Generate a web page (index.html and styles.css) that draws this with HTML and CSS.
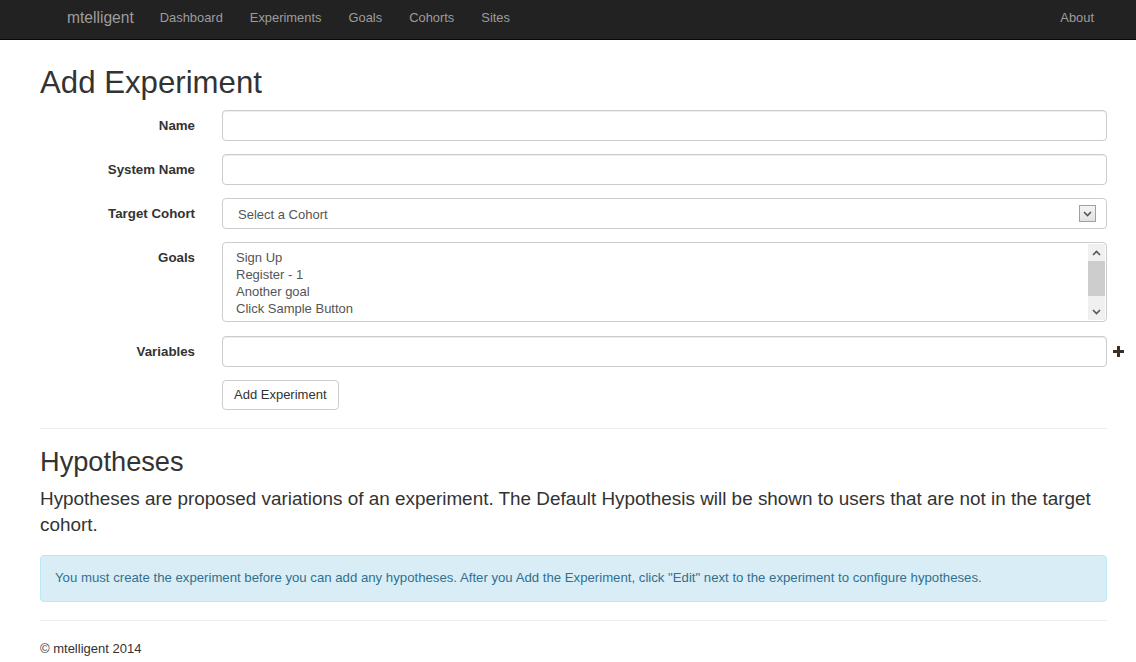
FILE: index.html
```html
<!DOCTYPE html>
<html>
<head>
<meta charset="utf-8">
<title>Add Experiment</title>
<link rel="stylesheet" href="styles.css">
</head>
<body>
<nav class="navbar">
  <div class="nav-left">
    <a class="brand" href="#">mtelligent</a>
    <a class="nav-link" href="#">Dashboard</a>
    <a class="nav-link" href="#">Experiments</a>
    <a class="nav-link" href="#">Goals</a>
    <a class="nav-link" href="#">Cohorts</a>
    <a class="nav-link" href="#">Sites</a>
  </div>
  <a class="nav-link" href="#">About</a>
</nav>
<main class="container">
  <h1 class="title">Add Experiment</h1>
  <form class="form">
    <div class="row">
      <label class="label">Name</label>
      <div class="field"><input class="input" type="text"></div>
    </div>
    <div class="row">
      <label class="label">System Name</label>
      <div class="field"><input class="input" type="text"></div>
    </div>
    <div class="row">
      <label class="label">Target Cohort</label>
      <div class="field">
        <div class="select">
          <span class="select-text">Select a Cohort</span>
          <span class="select-arrow"><svg width="9" height="6" viewBox="0 0 9 6"><path d="M1 1l3.5 3.5L8 1" fill="none" stroke="#555" stroke-width="1.6"/></svg></span>
        </div>
      </div>
    </div>
    <div class="row">
      <label class="label">Goals</label>
      <div class="field">
        <div class="listbox">
          <div class="options">
            <div>Sign Up</div>
            <div>Register - 1</div>
            <div>Another goal</div>
            <div>Click Sample Button</div>
          </div>
          <div class="scrollbar">
            <span class="sb-btn"><svg width="9" height="6" viewBox="0 0 9 6"><path d="M1 5l3.5-3.5L8 5" fill="none" stroke="#555" stroke-width="1.6"/></svg></span>
            <span class="sb-thumb"></span>
            <span class="sb-track"></span>
            <span class="sb-btn"><svg width="9" height="6" viewBox="0 0 9 6"><path d="M1 1l3.5 3.5L8 1" fill="none" stroke="#555" stroke-width="1.6"/></svg></span>
          </div>
        </div>
      </div>
    </div>
    <div class="row">
      <label class="label">Variables</label>
      <div class="field field-plus">
        <input class="input" type="text">
        <svg class="plus" width="11" height="11" viewBox="0 0 11 11"><path d="M4 0h3v4h4v3H7v4H4V7H0V4h4z" fill="#3b2f25"/></svg>
      </div>
    </div>
    <div class="row">
      <span class="label"></span>
      <div class="field"><button class="btn" type="button">Add Experiment</button></div>
    </div>
  </form>
  <hr class="rule">
  <h2 class="subtitle">Hypotheses</h2>
  <p class="lead">Hypotheses are proposed variations of an experiment. The Default Hypothesis will be shown to users that are not in the target cohort.</p>
  <div class="alert">You must create the experiment before you can add any hypotheses. After you Add the Experiment, click "Edit" next to the experiment to configure hypotheses.</div>
  <hr class="rule rule-foot">
  <footer class="footer">© mtelligent 2014</footer>
</main>
</body>
</html>
```
FILE: styles.css
```css
* { box-sizing: border-box; }
html, body { margin: 0; padding: 0; }
body {
  font-family: "Liberation Sans", Arial, sans-serif;
  font-size: 14px;
  line-height: 1.42857;
  color: #333;
  background: #fff;
}
a { text-decoration: none; }

.navbar {
  height: 40px;
  background: #222;
  border-bottom: 1px solid #080808;
  display: flex;
  align-items: center;
  justify-content: space-between;
  padding: 0 29px 3px 52px;
}
.nav-left { display: flex; align-items: center; }
.brand {
  color: #9d9d9d;
  font-size: 15.6px;
  padding: 0 15px;
  margin-right: -3px;
}
.nav-link {
  color: #9d9d9d;
  font-size: 12.9px;
  padding: 0 13px 0 14px;
}

.container {
  width: 1067px;
  margin-left: 40px;
}
.title {
  font-size: 31.2px;
  font-weight: 500;
  line-height: 1.1;
  margin: 26px 0 10px;
}

.form { display: flex; flex-direction: column; gap: 13px; }
.row { display: flex; align-items: flex-start; }
.label {
  width: 155px;
  text-align: right;
  font-weight: bold;
  font-size: 13.3px;
  padding-top: 7px;
  margin-right: 27px;
  flex: none;
}
.field { flex: 1; }
.field-plus { display: flex; align-items: center; position: relative; }
.plus { position: absolute; right: -17px; top: 10px; }
.input {
  display: block;
  width: 100%;
  height: 31px;
  border: 1px solid #ccc;
  border-radius: 4px;
  box-shadow: inset 0 1px 1px rgba(0,0,0,.075);
  font: inherit;
  padding: 4px 12px;
}
.select {
  height: 31px;
  border: 1px solid #ccc;
  border-radius: 4px;
  display: flex;
  align-items: center;
  justify-content: space-between;
  padding: 0 10px 0 15px;
  color: #555;
  font-size: 13px;
}
.select-text { padding-top: 2px; }
.select-arrow {
  width: 17px;
  height: 17px;
  border: 1px solid #a0a0a0;
  background: linear-gradient(#f4f4f4, #e2e2e2);
  display: flex;
  align-items: center;
  justify-content: center;
}
.listbox {
  height: 80px;
  border: 1px solid #ccc;
  border-radius: 4px;
  display: flex;
  overflow: hidden;
}
.options {
  flex: 1;
  padding: 6px 13px;
  color: #555;
  font-size: 13px;
  line-height: 17px;
}
.scrollbar {
  width: 17px;
  margin: 1px 1px 1px 0;
  background: #f0f0f0;
  display: flex;
  flex-direction: column;
}
.sb-btn {
  height: 17px;
  display: flex;
  align-items: center;
  justify-content: center;
}
.sb-thumb { height: 35px; background: #cdcdcd; }
.sb-track { flex: 1; }
.form .row:nth-child(5) { margin-top: 1px; }
.btn {
  height: 30px;
  padding: 0 11px;
  border: 1px solid #ccc;
  border-radius: 4px;
  background: #fff;
  color: #333;
  font: inherit;
  font-size: 13px;
}
.rule {
  border: 0;
  border-top: 1px solid #eee;
  margin: 18px 0 18px;
}
.subtitle {
  font-size: 27.2px;
  font-weight: 500;
  line-height: 1.1;
  margin: 0 0 9px;
}
.lead {
  font-size: 18.9px;
  line-height: 26px;
  margin: 0 0 17px;
}
.alert {
  background: #d9edf7;
  border: 1px solid #bce8f1;
  border-radius: 4px;
  color: #31708f;
  font-size: 13.2px;
  padding: 13px 14px;
}
.rule-foot { margin: 18px 0 19px; }
.footer { font-size: 13px; }
```
